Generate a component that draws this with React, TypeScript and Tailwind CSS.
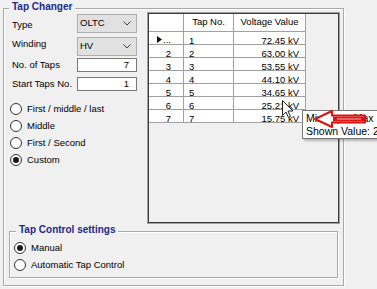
import React from 'react';

const taps = [
  { n: 1, v: '72.45 kV' },
  { n: 2, v: '63.00 kV' },
  { n: 3, v: '53.55 kV' },
  { n: 4, v: '44.10 kV' },
  { n: 5, v: '34.65 kV' },
  { n: 6, v: '25.21 kV' },
  { n: 7, v: '15.75 kV' },
];

const cell = 'h-[13px] border-b border-r border-[#a0a0a0] bg-white pt-[4px] leading-[9px]';

function Radio({ label, checked }: { label: string; checked?: boolean }) {
  return (
    <div className="flex h-[17px] items-center">
      <span className="flex h-[12px] w-[12px] items-center justify-center rounded-full border border-[#333] bg-white">
        {checked && <span className="h-[6px] w-[6px] rounded-full bg-[#1a1a1a]" />}
      </span>
      <span className="ml-[5px] leading-[12px]">{label}</span>
    </div>
  );
}

function Combo({ value }: { value: string }) {
  return (
    <div className="flex h-[19px] w-[60px] items-center justify-between border border-[#adadad] bg-[#e1e1e1] pl-[2px] pr-[5px]">
      <span>{value}</span>
      <svg width="8" height="5" viewBox="0 0 8 5">
        <path d="M0.5 0.5 4 4 7.5 0.5" fill="none" stroke="#404040" strokeWidth="1" />
      </svg>
    </div>
  );
}

function TextBox({ value }: { value: string }) {
  return (
    <div className="h-[14px] w-[60px] border border-[#7a7a7a] bg-white pr-[7px] text-right leading-[12px]">
      {value}
    </div>
  );
}

export default function App() {
  return (
    <div className="relative h-[289px] w-[377px] overflow-hidden bg-[#f0f0f0] pl-[3px] pt-[8px] font-['Liberation_Sans',Arial,sans-serif] text-[9.5px] text-black">
      {/* Tap Changer group */}
      <div className="relative flex h-[278px] w-[341px] flex-col border border-[#a9a9a9] pl-[5px] pt-[3px] shadow-[inset_1px_1px_0_#fff,1px_1px_0_#fff]">
        <span className="absolute left-[5px] top-[-8px] bg-[#f0f0f0] px-[3px] text-[10px] font-bold leading-[12px] text-[#1b2a8c]">
          Tap Changer
        </span>

        <div className="flex h-[212px]">
          <div className="w-[138px] pl-[3px]">
            <div className="mt-[2px] flex items-center">
              <span className="w-[65px] pt-[4px]">Type</span>
              <Combo value="OLTC" />
            </div>
            <div className="mt-[4px] flex items-center">
              <span className="w-[65px] pb-[4px]">Winding</span>
              <Combo value="HV" />
            </div>
            <div className="mt-[2px] flex items-center">
              <span className="w-[65px]">No. of Taps</span>
              <TextBox value="7" />
            </div>
            <div className="mt-[5px] flex items-center">
              <span className="w-[65px]">Start Taps No.</span>
              <TextBox value="1" />
            </div>
            <div className="-ml-[2px] mt-[9px]">
              <Radio label="First / middle / last" />
              <Radio label="Middle" />
              <Radio label="First / Second" />
              <Radio label="Custom" checked />
            </div>
          </div>

          <div className="h-[212px] w-[193px] border border-[#a0a0a0]">
            <div className="h-full border border-[#3c3c3c] bg-[#f0f0f0]">
              <div className="grid w-[157px] grid-cols-[35px_50px_72px]">
                <div className="h-[18px] border-b border-r border-[#a0a0a0] bg-white" />
                <div className="flex h-[18px] items-center justify-center border-b border-r border-[#a0a0a0] bg-white">
                  Tap No.
                </div>
                <div className="flex h-[18px] items-center justify-center border-b border-r border-[#a0a0a0] bg-white">
                  Voltage Value
                </div>
                {taps.map((t) => (
                  <React.Fragment key={t.n}>
                    {t.n === 1 ? (
                      <div className={`${cell} flex items-end pl-[8px]`}>
                        <svg width="5" height="7" viewBox="0 0 5 7" className="mb-[1px]">
                          <path d="M0 0 5 3.5 0 7Z" fill="#111" />
                        </svg>
                        <span className="ml-[1px]">...</span>
                      </div>
                    ) : (
                      <div className={`${cell} pr-[12px] text-right`}>{t.n}</div>
                    )}
                    <div className={`${cell} pl-[5px] ${t.n === 1 ? 'bg-[#adadad]' : ''}`}>{t.n}</div>
                    <div className={`${cell} pr-[6px] text-right`}>{t.v}</div>
                  </React.Fragment>
                ))}
              </div>
            </div>
          </div>
        </div>

        {/* Tap Control settings group */}
        <div className="relative mt-[7px] h-[47px] w-[329px] border border-[#a9a9a9] pl-[4px] pt-[7px] shadow-[inset_1px_1px_0_#fff,1px_1px_0_#fff]">
          <span className="absolute left-[6px] top-[-8px] bg-[#f0f0f0] px-[3px] text-[10px] font-bold leading-[12px] text-[#1b2a8c]">
            Tap Control settings
          </span>
          <Radio label="Manual" checked />
          <Radio label="Automatic Tap Control" />
        </div>
      </div>

      {/* tooltip */}
      <div className="absolute left-[302px] top-[110px] h-[29px] w-[110px] border border-[#767676] bg-white pl-[3px] pt-[1px] text-[10.5px] leading-[13px] whitespace-nowrap shadow-[2px_2px_2px_rgba(0,0,0,0.25)]">
        <div>Min Taps: Max</div>
        <div>Shown Value: 25.21 kV</div>
      </div>

      {/* red annotation arrow */}
      <svg className="absolute left-[313px] top-[109px]" width="56" height="20" viewBox="0 0 56 20">
        <polygon points="2,10 19,2 19,6.5 52,6.5 52,13.5 19,13.5 19,18" fill="#fff" stroke="#e01010" strokeWidth="2" strokeLinejoin="round" />
        <rect x="20" y="7.5" width="31" height="5" fill="#d81818" />
        <rect x="24" y="9.5" width="24" height="1" fill="#f4b0b0" />
      </svg>

      {/* mouse cursor */}
      <svg className="absolute left-[282px] top-[100px]" width="12" height="19" viewBox="0 0 12 19">
        <path d="M0.5 0.5 0.5 15.5 4 12 6.5 17.5 8.5 16.5 6 11 11 11Z" fill="#fff" stroke="#222" strokeWidth="1" strokeLinejoin="round" />
      </svg>
    </div>
  );
}
